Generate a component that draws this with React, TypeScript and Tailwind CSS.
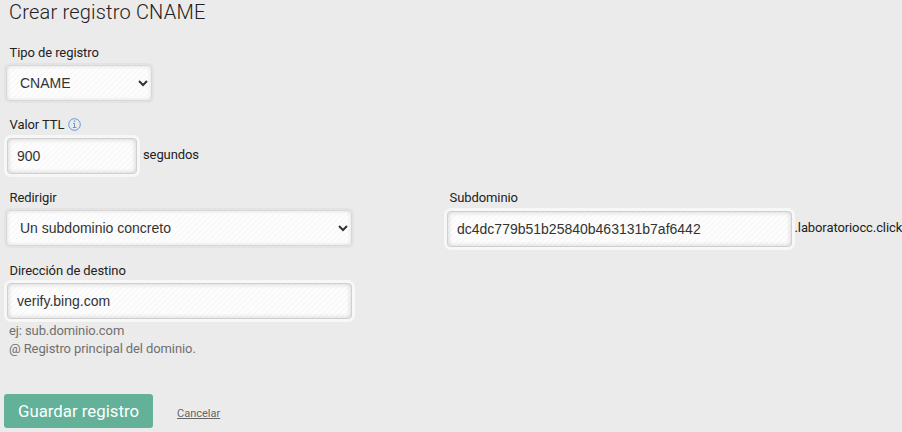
import { clsx } from 'clsx';
import type { ReactNode } from 'react';

const control = clsx(
  'block h-9 rounded-[4px] border font-["Liberation_Sans",sans-serif] text-[14px] text-[#333] outline-none',
  'bg-[repeating-linear-gradient(135deg,#fdfdfd_0px,#fdfdfd_2px,#f8f8f8_3px,#f8f8f8_4px)]'
);

interface FieldProps {
  id: string;
  label: ReactNode;
  className?: string;
  children: ReactNode;
}

function Field({ id, label, className, children }: FieldProps) {
  return (
    <div className={className}>
      <label
        htmlFor={id}
        className="flex h-[18px] items-center pl-[2.5px] text-[13px] leading-[18px] tracking-[-0.08px] text-[#222]"
      >
        {label}
      </label>
      {children}
    </div>
  );
}

interface SelectProps {
  id: string;
  option: string;
  className?: string;
}

function Select({ id, option, className }: SelectProps) {
  return (
    <select
      id={id}
      className={clsx(
        control,
        '-ml-px border-[#d8d8d8] pl-[9px] shadow-[0_0_0_2px_#e3e3e3,inset_0_0_4px_#ddd]',
        className
      )}
    >
      <option>{option}</option>
    </select>
  );
}

interface TextInputProps {
  id: string;
  value: string;
  className?: string;
}

function TextInput({ id, value, className }: TextInputProps) {
  return (
    <input
      id={id}
      type="text"
      defaultValue={value}
      className={clsx(
        control,
        'border-[#d0d0d0] px-[9px] shadow-[0_0_0_3px_#f7f7f7,inset_0_0_5px_#ccc]',
        className
      )}
    />
  );
}

function InfoIcon() {
  return (
    <svg width="13" height="13" viewBox="0 0 13 13" className="mb-px ml-[3.5px]" fill="none" stroke="#6c93d4">
      <circle cx="6.5" cy="6.5" r="5.8" strokeWidth="1" />
      <path d="M5 5.5h1.5v4M4.8 9.5h3.6" strokeWidth="1" />
      <path d="M5.8 3.2h1.4" strokeWidth="1.4" />
    </svg>
  );
}

export default function App() {
  return (
    <form
      className="h-[432px] w-[902px] overflow-hidden bg-[#ebebeb] pl-[7px] font-[Roboto,sans-serif]"
      onSubmit={(e) => e.preventDefault()}
    >
      <h1 className="h-11 pl-[2px] text-[20px] leading-6 font-light tracking-[0.2px] text-[#222]">
        Crear registro CNAME
      </h1>

      <Field id="type" label="Tipo de registro">
        <Select id="type" option="CNAME" className="mt-[3px] w-[146px]" />
      </Field>

      <Field
        id="ttl"
        className="mt-[15px]"
        label={
          <>
            Valor TTL
            <InfoIcon />
          </>
        }
      >
        <div className="mt-[4px] flex items-center">
          <TextInput id="ttl" value="900" className="w-[130px]" />
          <span className="ml-[6px] pb-0.5 text-[13px] tracking-[-0.1px] text-[#222]">segundos</span>
        </div>
      </Field>

      <div className="mt-[15px] flex">
        <Field id="redirect" label="Redirigir" className="w-[440px] shrink-0">
          <Select id="redirect" option="Un subdominio concreto" className="mt-[3px] w-[346px]" />
        </Field>
        <Field id="subdomain" label="Subdominio" className="shrink-0">
          <div className="mt-[4px] flex items-center">
            <TextInput id="subdomain" value="dc4dc779b51b25840b463131b7af6442" className="w-[345px]" />
            <span className="ml-[2.5px] pb-0.5 text-[13px] tracking-[-0.1px] whitespace-nowrap text-[#222]">
              .laboratoriocc.click
            </span>
          </div>
        </Field>
      </div>

      <Field id="target" label="Dirección de destino" className="mt-[15px]">
        <TextInput id="target" value="verify.bing.com" className="mt-[3px] w-[345px]" />
      </Field>
      <p className="mt-[3px] pl-[2px] text-[13px] leading-[18px] tracking-[-0.1px] text-[#707070]">
        ej: sub.dominio.com
        <br />@ Registro principal del dominio.
      </p>

      <div className="mt-9 -ml-[3px] flex items-center">
        <button type="submit" className="h-[34px] w-[149px] rounded-[3px] bg-[#62b198] pt-px text-[16.8px] text-white">
          Guardar registro
        </button>
        <a href="#" className="mt-1.5 ml-6 text-[11px] text-[#666] underline">
          Cancelar
        </a>
      </div>
    </form>
  );
}
